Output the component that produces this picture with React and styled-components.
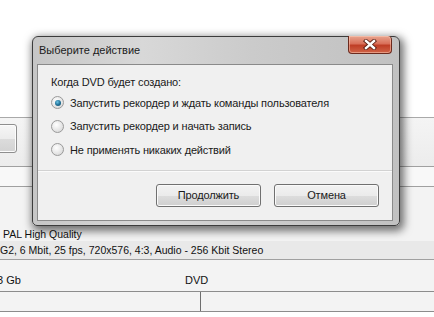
import React from 'react';
import styled, { createGlobalStyle } from 'styled-components';

const GlobalStyle = createGlobalStyle`
    html, body {
        margin: 0;
        padding: 0;
        width: 434px;
        height: 317px;
        overflow: hidden;
        background: #ffffff;
    }
`;

const Page = styled.div`
    position: relative;
    width: 434px;
    height: 317px;
    overflow: hidden;
    display: flex;
    flex-direction: column;
    font-family: "Liberation Sans", Arial, sans-serif;
    color: #111;
`;

const TopArea = styled.div`
    height: 117px;
    flex: none;
    background: #ffffff;
    border-bottom: 1px solid #a9a9a9;
`;

const Toolbar = styled.div`
    height: 48px;
    flex: none;
    display: flex;
    align-items: flex-start;
    background: linear-gradient(#f4f4f4, #ececec);
    border-bottom: 1px solid #a0a0a0;
`;

const ToolButton = styled.div`
    width: 60px;
    height: 29px;
    box-sizing: border-box;
    margin-left: -43px;
    margin-top: 6px;
    border: 1px solid #8e8e8e;
    border-radius: 3px;
    background: linear-gradient(#f6f6f6 0%, #ececec 50%, #dcdcdc 51%, #d2d2d2 100%);
    box-shadow: inset 0 0 0 1px #fcfcfc;
`;

const Strip = styled.div`
    height: ${p => p.$h}px;
    flex: none;
    background: ${p => p.$bg || '#f6f6f6'};
    border-bottom: ${p => (p.$line ? '1px solid #a0a0a0' : 'none')};
`;

const InfoBlock = styled.div`
    flex: none;
    display: flex;
    flex-direction: column;
    background: #f3f3f3;
    border-bottom: 1px solid #a0a0a0;
    padding-top: 41px;
    font-size: 10.5px;
`;

const InfoLine = styled.div`
    height: ${p => p.$h}px;
    line-height: ${p => p.$h}px;
    padding-left: ${p => p.$indent}px;
    background: ${p => p.$bg || 'transparent'};
    white-space: nowrap;
`;

const SizeRow = styled.div`
    height: 32px;
    flex: none;
    display: flex;
    align-items: flex-end;
    padding-bottom: 4px;
    box-sizing: border-box;
    background: #f3f3f3;
    border-bottom: 1px solid #8c8c8c;
    font-size: 11px;
`;

const SizeCell = styled.div`
    width: ${p => p.$w}px;
    line-height: 14px;
    white-space: nowrap;
`;

const Cut = styled.span`
    margin-left: -3px;
`;

const GridRow = styled.div`
    height: 19px;
    flex: none;
    display: flex;
    background: #f3f3f3;
    border-bottom: 1px solid #8c8c8c;
`;

const GridCell = styled.div`
    width: ${p => p.$w}px;
    border-right: ${p => (p.$divider ? '1px solid #6e6e6e' : 'none')};
`;

/* dialog window, floats over the app */
const Window = styled.div`
    position: absolute;
    left: 32px;
    top: 36px;
    width: 368px;
    height: 190px;
    box-sizing: border-box;
    border: 1px solid #3c3c3c;
    border-radius: 6px 6px 5px 5px;
    background: linear-gradient(90deg, #c6c6c6 0%, #d8d8d8 30%, #cbcbcb 60%, #c1c1c1 100%);
    box-shadow: 2px 3px 9px 2px rgba(0, 0, 0, 0.55);
    display: flex;
    flex-direction: column;
    padding: 0 6px 4px 4px;
`;

const TitleBar = styled.div`
    height: 27px;
    flex: none;
    display: flex;
    align-items: flex-start;
    justify-content: space-between;
`;

const TitleText = styled.div`
    padding: 7px 0 0 2px;
    font-size: 11px;
    color: #1b1b1b;
`;

const CloseButton = styled.div`
    width: 44px;
    height: 18px;
    margin-top: -1px;
    margin-right: 1px;
    box-sizing: border-box;
    border: 1px solid #6b2a1e;
    border-top: none;
    border-radius: 0 4px 4px 4px;
    background: linear-gradient(#e8a58f 0%, #d9705a 45%, #bf3e26 55%, #d06448 100%);
    box-shadow: inset 0 0 0 1px rgba(255, 210, 190, 0.5);
    display: flex;
    align-items: center;
    justify-content: center;
`;

const Client = styled.div`
    flex: 1;
    display: flex;
    flex-direction: column;
    border: 1px solid #8a8a8a;
    background: #f0f0f0;
`;

const Content = styled.div`
    padding: 9px 0 8px 13px;
    border-bottom: 1px solid #d2d2d2;
    font-size: 11px;
    letter-spacing: -0.15px;
    color: #1a1a1a;
`;

const Heading = styled.div`
    height: 16px;
    line-height: 16px;
    margin-bottom: 1px;
`;

const Option = styled.label`
    height: 23.5px;
    display: flex;
    align-items: center;
    gap: 6px;
`;

const Radio = styled.span`
    width: 11px;
    height: 11px;
    border-radius: 50%;
    border: 1px solid #9a9a9a;
    background: radial-gradient(circle at 40% 35%, #ffffff 0%, #e6e6e6 55%, #cfcfcf 100%);
    display: flex;
    align-items: center;
    justify-content: center;
    &::after {
        content: '';
        width: 6px;
        height: 6px;
        border-radius: 50%;
        display: ${p => (p.$checked ? 'block' : 'none')};
        background: radial-gradient(circle at 40% 35%, #6cc3e4 0%, #22739a 50%, #0c4460 100%);
    }
`;

const Footer = styled.div`
    flex: 1;
    display: flex;
    justify-content: flex-end;
    align-items: flex-start;
    gap: 13px;
    padding: 12px 13px 0 0;
    border-top: 1px solid #fbfbfb;
`;

const Button = styled.div`
    width: 105px;
    height: 23px;
    box-sizing: border-box;
    border: 1px solid #707070;
    border-radius: 3px;
    background: linear-gradient(#f2f2f2 0%, #ebebeb 50%, #dddddd 51%, #cfcfcf 100%);
    box-shadow: inset 0 0 0 1px #fafafa;
    display: flex;
    align-items: center;
    justify-content: center;
    font-size: 11px;
    letter-spacing: -0.15px;
    color: #1a1a1a;
`;

const CloseGlyph = () => (
    <svg width="14" height="11" viewBox="0 0 14 11">
        <path d="M3 2 L11 9 M11 2 L3 9" stroke="#5a1f14" strokeWidth="4.2" strokeLinecap="square" />
        <path d="M3 2 L11 9 M11 2 L3 9" stroke="#ffffff" strokeWidth="2.4" strokeLinecap="square" />
    </svg>
);

const options = [
    { label: 'Запустить рекордер и ждать команды пользователя', checked: true },
    { label: 'Запустить рекордер и начать запись' },
    { label: 'Не применять никаких действий' },
];

const App = () => (
    <Page>
        <GlobalStyle />
        <TopArea />
        <Toolbar>
            <ToolButton />
        </Toolbar>
        <Strip $h={19} $bg="#f8f8f8" $line />
        <InfoBlock>
            <InfoLine $h={13} $indent={3}>PAL High Quality</InfoLine>
            <InfoLine $h={18} $indent={0} $bg="#e9e9e9">G2, 6 Mbit, 25 fps, 720x576, 4:3, Audio - 256 Kbit Stereo</InfoLine>
        </InfoBlock>
        <SizeRow>
            <SizeCell $w={185}>
                <Cut>3 Gb</Cut>
            </SizeCell>
            <SizeCell $w={100}>DVD</SizeCell>
        </SizeRow>
        <GridRow>
            <GridCell $w={200} $divider />
            <GridCell $w={234} />
        </GridRow>

        <Window>
            <TitleBar>
                <TitleText>Выберите действие</TitleText>
                <CloseButton>
                    <CloseGlyph />
                </CloseButton>
            </TitleBar>
            <Client>
                <Content>
                    <Heading>Когда DVD будет создано:</Heading>
                    {options.map(o => (
                        <Option key={o.label}>
                            <Radio $checked={o.checked} />
                            {o.label}
                        </Option>
                    ))}
                </Content>
                <Footer>
                    <Button>Продолжить</Button>
                    <Button>Отмена</Button>
                </Footer>
            </Client>
        </Window>
    </Page>
);

export default App;
